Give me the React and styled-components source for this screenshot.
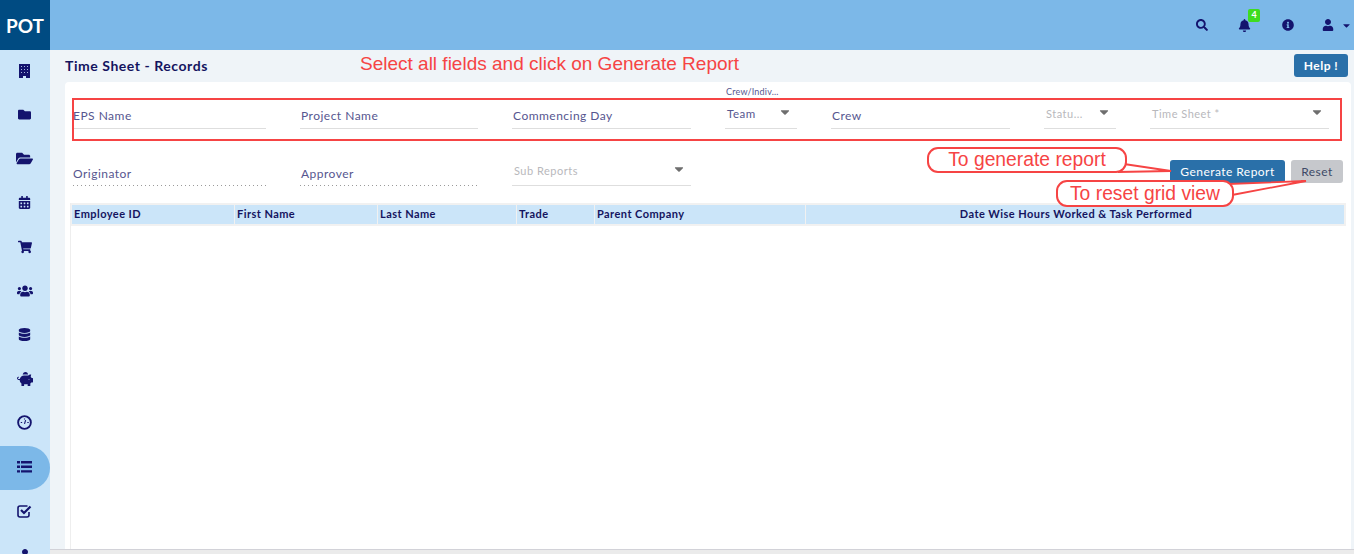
import React from "react";
import styled, { createGlobalStyle } from "styled-components";
import {
  FaFolder, FaFolderOpen, FaCalendarAlt, FaShoppingCart, FaUsers, FaDatabase,
  FaPiggyBank, FaUser, FaSearch, FaBell, FaInfoCircle, FaCaretDown,
} from "react-icons/fa";

const Global = createGlobalStyle`
  html, body { margin: 0; padding: 0; height: 100%; overflow: hidden; background: #eff4f8; }
  body { font-family: Lato, "Open Sans", sans-serif; }
  #root { height: 100%; }
  * { box-sizing: border-box; }
`;

const Page = styled.div`
  position: relative;
  display: grid;
  grid-template-columns: 50px 1fr;
  grid-template-rows: 50px 1fr;
  height: 554px;
  overflow: hidden;
`;
const Logo = styled.div`
  background: #004b82;
  color: #fff;
  font-size: 19px;
  font-weight: 700;
  display: flex;
  align-items: center;
  justify-content: center;
`;
const Topbar = styled.header`
  background: #7cb8e8;
  display: flex;
  align-items: center;
  justify-content: flex-end;
  color: #14146e;
`;
const TopIcon = styled.div`
  position: relative;
  width: ${(p) => p.$w}px;
  padding-right: ${(p) => p.$pad || 0}px;
  display: flex;
  justify-content: center;
  align-items: center;
`;
const Badge = styled.span`
  position: absolute;
  top: -10px;
  left: 25px;
  width: 12px;
  height: 13px;
  border-radius: 2px;
  background: #3fdc1e;
  color: #fff;
  font-size: 9px;
  font-weight: 700;
  line-height: 12px;
  text-align: center;
`;
const UserCaret = styled(FaCaretDown)`
  position: absolute;
  right: 2px;
  top: 1px;
`;
const Sidebar = styled.nav`
  background: #cbe5f9;
  display: flex;
  flex-direction: column;
  overflow: hidden;
`;
const NavItem = styled.div`
  flex: 0 0 44px;
  display: flex;
  align-items: center;
  justify-content: center;
  color: #14146e;
  font-size: 14px;
  padding: 0 1px 3px 0;
  border-radius: 0 22px 22px 0;
  background: ${(p) => (p.$active ? "#7cb8e8" : "transparent")};
`;
const Main = styled.main`
  display: flex;
  flex-direction: column;
  min-width: 0;
  position: relative;
`;
const TitleRow = styled.div`
  height: 32px;
  display: flex;
  align-items: center;
  justify-content: space-between;
  padding: 0 6px 1px 15px;
`;
const Title = styled.h1`
  margin: 0;
  font-size: 14px;
  font-weight: 700;
  letter-spacing: 0.55px;
  color: #14145f;
`;
const Button = styled.button`
  border: 0;
  border-radius: 3px;
  font-family: inherit;
  font-size: ${(p) => p.$size || 12}px;
  font-weight: ${(p) => p.$weight || 400};
  letter-spacing: 0.45px;
  height: ${(p) => p.$h}px;
  width: ${(p) => p.$w}px;
  padding: 0;
  background: ${(p) => (p.$muted ? "#c6c8cc" : "#2a70a9")};
  color: ${(p) => (p.$muted ? "#3d4a66" : "#fff")};
`;
const Card = styled.section`
  flex: 1;
  margin: 0 3px 5px 15px;
  background: #fff;
  border-radius: 4px 4px 0 0;
  padding: 0 0 0 5px;
  display: flex;
  flex-direction: column;
  min-height: 0;
`;
const FormRow = styled.div`
  display: flex;
  gap: 34px;
  height: ${(p) => p.$h}px;
  padding: ${(p) => p.$top}px 0 0 3px;
  align-items: flex-start;
`;
const Field = styled.div`
  position: relative;
  flex: 0 0 ${(p) => p.$w}px;
  height: 29px;
  border-bottom: 1px solid #dedede;
  font-size: 12px;
  letter-spacing: 0.48px;
  color: #56568f;
  padding: 8px 0 0 ${(p) => (p.$flush ? 0 : 1)}px;
  line-height: 16px;
`;
const DottedField = styled(Field)`
  border-bottom: 0;
  background: linear-gradient(to right, #9a9a9a 1px, transparent 1px) left bottom / 4px 1px repeat-x;
  padding-top: 9px;
`;
const SelectField = styled(Field)`
  font-size: ${(p) => (p.$hint ? 11 : 11.5)}px;
  letter-spacing: 0.5px;
  color: ${(p) => (p.$hint ? "#b8b8bc" : "#56568f")};
  padding: 6px 0 0 2px;
`;
const Caret = styled(FaCaretDown)`
  position: absolute;
  right: 5px;
  top: 5px;
  font-size: 14px;
  color: #6e6e6e;
`;
const FloatLabel = styled.span`
  position: absolute;
  top: -13px;
  left: 1px;
  font-size: 9px;
  line-height: 10px;
  letter-spacing: 0.2px;
  color: #56568f;
  white-space: nowrap;
`;
const Spacer = styled.div`
  flex: 1;
`;
const Actions = styled.div`
  display: flex;
  gap: 6px;
  margin: 3px 8px 0 0;
`;
const TableWrap = styled.div`
  flex: 1;
  border-left: 1px solid #eeeeee;
  display: flex;
  flex-direction: column;
`;
const HeadRow = styled.div`
  display: grid;
  grid-template-columns: 162px 142px 138px 77px 210px 538px;
  gap: 1px;
  width: 1275px;
  padding: 2px 0 2px 1px;
  background: #f1f1f1;
`;
const HeadCell = styled.div`
  height: 19px;
  background: #cbe5f9;
  color: #14145f;
  font-size: 11px;
  font-weight: 700;
  letter-spacing: 0.45px;
  line-height: 17px;
  padding-left: 2px;
  text-align: ${(p) => (p.$center ? "center" : "left")};
`;
const HScroll = styled.div`
  position: absolute;
  left: 0;
  right: 0;
  bottom: 0;
  height: 5px;
  background: #ebebeb;
  border-top: 1px solid #d2d2d8;
`;
const Note = styled.div`
  position: absolute;
  left: ${(p) => p.$x}px;
  top: ${(p) => p.$y}px;
  width: ${(p) => p.$w}px;
  height: ${(p) => p.$h}px;
  color: #f64444;
  font-family: "Liberation Sans", Arial, sans-serif;
  font-size: 19.3px;
  line-height: ${(p) => p.$h - 4}px;
  text-align: center;
  white-space: nowrap;
  border: 2px solid #f64444;
  border-radius: 11px;
  background: #fff;
`;
const Plain = styled.div`
  position: absolute;
  left: 360px;
  top: 54px;
  color: #f64444;
  font-family: "Liberation Sans", Arial, sans-serif;
  font-size: 19px;
  line-height: 20px;
  white-space: nowrap;
`;
const Frame = styled.div`
  position: absolute;
  left: 72px;
  top: 98px;
  width: 1270px;
  height: 43px;
  border: 2px solid #f64444;
  pointer-events: none;
`;
const Tails = styled.svg`
  position: absolute;
  left: 0;
  top: 0;
  pointer-events: none;
`;

const Gauge = () => (
  <svg width="15" height="15" viewBox="0 0 16 16" fill="none" stroke="currentColor">
    <circle cx="8" cy="8" r="6.8" strokeWidth="2" />
    <path d="M8 9.5 9.2 5.5M4 8h1.5M11 8h1.5M8 3.8v1" strokeWidth="1.2" />
  </svg>
);
const Building = () => (
  <svg width="11" height="14" viewBox="0 0 11 14" fill="currentColor">
    <path d="M0 0h11v14H7v-2H4v2H0z" />
    <path d="M2 2h1v1H2zM5 2h1v1H5zM8 2h1v1H8zM2 5h1v1H2zM5 5h1v1H5zM8 5h1v1H8zM2 8h1v1H2zM5 8h1v1H5zM8 8h1v1H8z" fill="#a9b7dc" />
  </svg>
);
const ListIcon = () => (
  <svg width="15" height="14" viewBox="0 0 15 14" fill="currentColor">
    <path d="M0 1h3v2.4H0zM4 1h11v2.4H4zM0 5.6h3V8H0zM4 5.6h11V8H4zM0 10.2h3v2.4H0zM4 10.2h11v2.4H4z" />
  </svg>
);
const CheckBox = () => (
  <svg width="15" height="14" viewBox="0 0 15 14" fill="none" stroke="currentColor">
    <path d="M10.5 2H3Q1 2 1 4v7q0 2 2 2h7q2 0 2-2V8" strokeWidth="1.6" />
    <path d="M4 6l3 3 6.5-6.5" strokeWidth="2.2" />
  </svg>
);

const nav = [
  <Building key="a" />, <FaFolder key="b" size={13} />, <FaFolderOpen key="c" size={17} />,
  <FaCalendarAlt key="d" size={13} />, <FaShoppingCart key="e" size={14} />, <FaUsers key="f" size={16} />,
  <FaDatabase key="g" size={13} />, <FaPiggyBank key="h" size={16} />, <Gauge key="i" />,
  <ListIcon key="j" />, <CheckBox key="k" />, <FaUser key="l" size={12} />,
];
const heads = ["Employee ID", "First Name", "Last Name", "Trade", "Parent Company"];

export default function App() {
  return (
    <Page>
      <Global />
      <Logo>POT</Logo>
      <Topbar>
        <TopIcon $w={43}><FaSearch size={12} /></TopIcon>
        <TopIcon $w={43}><FaBell size={13} /><Badge>4</Badge></TopIcon>
        <TopIcon $w={43}><FaInfoCircle size={12} /></TopIcon>
        <TopIcon $w={45} $pad={8}><FaUser size={12} /><UserCaret size={11} /></TopIcon>
      </Topbar>
      <Sidebar>
        {nav.map((icon, i) => (
          <NavItem key={i} $active={i === 9}>{icon}</NavItem>
        ))}
      </Sidebar>
      <Main>
        <TitleRow>
          <Title>Time Sheet - Records</Title>
          <Button $w={54} $h={23} $size={12} $weight={700}>Help !</Button>
        </TitleRow>
        <Card>
          <FormRow $h={70} $top={18}>
            <Field $w={193} $flush>EPS Name</Field>
            <Field $w={178}>Project Name</Field>
            <Field $w={179}>Commencing Day</Field>
            <SelectField $w={72}><FloatLabel>Crew/Indiv...</FloatLabel>Team<Caret /></SelectField>
            <Field $w={179}>Crew</Field>
            <SelectField $w={72} $hint>Statu...<Caret /></SelectField>
            <SelectField $w={179} $hint>Time Sheet *<Caret /></SelectField>
          </FormRow>
          <FormRow $h={51} $top={5}>
            <DottedField $w={193} $flush>Originator</DottedField>
            <DottedField $w={178}>Approver</DottedField>
            <SelectField $w={179} $hint>Sub Reports<Caret /></SelectField>
            <Spacer />
            <Actions>
              <Button $w={115} $h={23}>Generate Report</Button>
              <Button $w={52} $h={23} $muted>Reset</Button>
            </Actions>
          </FormRow>
          <TableWrap>
            <HeadRow>
              {heads.map((h) => <HeadCell key={h}>{h}</HeadCell>)}
              <HeadCell $center>Date Wise Hours Worked &amp; Task Performed</HeadCell>
            </HeadRow>
          </TableWrap>
        </Card>
        <HScroll />
      </Main>
      <Frame />
      <Plain>Select all fields and click on Generate Report</Plain>
      <Tails width="1354" height="554" fill="#fff" stroke="#f64444" strokeWidth="1.8">
        <path d="M1124 164 1171 171 1118 172" />
        <path d="M1228 184 1306 181 1232 195" />
      </Tails>
      <Note $x={927} $y={147} $w={200} $h={26}>To generate report</Note>
      <Note $x={1056} $y={180} $w={178} $h={27}>To reset grid view</Note>
    </Page>
  );
}
